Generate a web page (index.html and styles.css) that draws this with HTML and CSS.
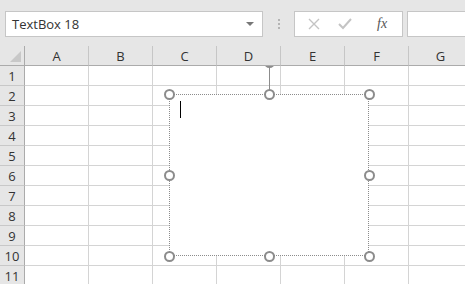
FILE: index.html
```html
<!DOCTYPE html>
<html lang="en">

<head>
    <meta charset="UTF-8">
    <title>Sheet1</title>
    <link rel="stylesheet" href="styles.css">
</head>

<body>
    <div class="formula-bar">
        <div class="name-box">
            <span class="name-text">TextBox 18</span>
            <span class="name-arrow"></span>
        </div>
        <div class="grip">
            <span></span><span></span><span></span>
        </div>
        <div class="fx-buttons">
            <svg class="btn-icon" width="14" height="14" viewBox="0 0 14 14">
                <path d="M2 2 L12 12 M12 2 L2 12" stroke="#c4c4c4" stroke-width="1.4" fill="none"/>
            </svg>
            <svg class="btn-icon" width="16" height="14" viewBox="0 0 16 14">
                <path d="M2 7 L6 11 L14 2" stroke="#c4c4c4" stroke-width="2" fill="none"/>
            </svg>
            <span class="fx">fx</span>
        </div>
        <div class="formula-input"></div>
    </div>

    <div class="sheet">
        <div class="grid" id="grid"></div>

        <span class="handle h-rot"></span>
        <div class="textbox">
            <div class="caret"></div>
            <span class="rotate-line"></span>
            <span class="handle h-tl"></span>
            <span class="handle h-tm"></span>
            <span class="handle h-tr"></span>
            <span class="handle h-ml"></span>
            <span class="handle h-mr"></span>
            <span class="handle h-bl"></span>
            <span class="handle h-bm"></span>
            <span class="handle h-br"></span>
        </div>
    </div>

    <script>
        const grid = document.getElementById('grid');
        const cols = ['A', 'B', 'C', 'D', 'E', 'F', 'G'];

        let html = '<div class="corner"></div>';
        cols.forEach(c => {
            html += '<div class="col-head">' + c + '</div>';
        });
        for (let r = 1; r <= 11; r++) {
            html += '<div class="row-head">' + r + '</div>';
            cols.forEach(() => {
                html += '<div class="cell"></div>';
            });
        }
        grid.innerHTML = html;
    </script>
</body>

</html>
```

FILE: styles.css
```css
body {
    margin: 0;
    padding: 0;
    font-family: 'Open Sans', 'Noto Sans', sans-serif;
    background-color: #ffffff;
    overflow: hidden;
    width: 465px;
    height: 284px;
}

/* formula bar */
.formula-bar {
    height: 46px;
    background-color: #e6e6e6;
    display: flex;
    align-items: flex-start;
    padding-top: 11px;
    padding-left: 5px;
    box-sizing: border-box;
}

.name-box {
    width: 258px;
    height: 26px;
    background-color: #fff;
    border: 1px solid #c6c6c6;
    box-sizing: border-box;
    display: flex;
    align-items: center;
    justify-content: space-between;
    padding: 0 8px 0 6px;
}

.name-text {
    font-size: 13px;
    color: #333;
}

.name-arrow {
    width: 0;
    height: 0;
    border-left: 4px solid transparent;
    border-right: 4px solid transparent;
    border-top: 4px solid #777;
}

.grip {
    width: 31px;
    height: 26px;
    display: flex;
    flex-direction: column;
    align-items: center;
    justify-content: center;
    gap: 2px;
}

.grip span {
    width: 2px;
    height: 2px;
    background-color: #b4b4b4;
}

.fx-buttons {
    width: 109px;
    height: 26px;
    background-color: #fff;
    border: 1px solid #c6c6c6;
    box-sizing: border-box;
    display: flex;
    align-items: center;
    padding-left: 12px;
    gap: 16px;
}

.fx {
    font-family: 'Liberation Serif', serif;
    font-style: italic;
    font-size: 14px;
    color: #555;
    margin-left: 8px;
}

.formula-input {
    flex: 1;
    height: 26px;
    margin-left: 4px;
    background-color: #fff;
    border: 1px solid #c6c6c6;
    border-right: none;
    box-sizing: border-box;
}

/* sheet */
.sheet {
    position: relative;
}

.grid {
    display: grid;
    grid-template-columns: 25px repeat(7, 64px);
    grid-auto-rows: 20px;
}

.grid > div {
    border-right: 1px solid #d4d4d4;
    border-bottom: 1px solid #d4d4d4;
    box-sizing: border-box;
}

.corner {
    background-color: #e6e6e6;
    position: relative;
    z-index: 2;
    border-bottom-color: #ababab !important;
    border-right-color: #ababab !important;
}

.corner::after {
    content: '';
    position: absolute;
    right: 3px;
    bottom: 3px;
    width: 0;
    height: 0;
    border-left: 11px solid transparent;
    border-bottom: 11px solid #c8c8c8;
}

.col-head {
    position: relative;
    z-index: 2;
    background-color: #e6e6e6;
    border-right-color: #c6c6c6 !important;
    border-bottom-color: #ababab !important;
    font-size: 13px;
    color: #333;
    text-align: center;
    line-height: 20px;
}

.row-head {
    background-color: #e6e6e6;
    border-right-color: #ababab !important;
    border-bottom-color: #c8c8c8 !important;
    font-size: 13px;
    color: #333;
    text-align: center;
    line-height: 20px;
}

/* text box shape */
.textbox {
    position: absolute;
    left: 169px;
    top: 48px;
    width: 200px;
    height: 162px;
    background-color: #fff;
    border: 1px dotted #8c8c8c;
    box-sizing: border-box;
}

.caret {
    position: absolute;
    left: 10px;
    top: 6px;
    width: 1px;
    height: 17px;
    background-color: #000;
}

.rotate-line {
    position: absolute;
    left: 99px;
    top: -28px;
    width: 1px;
    height: 28px;
    background-color: #8c8c8c;
}

.handle {
    position: absolute;
    width: 11px;
    height: 11px;
    border: 2px solid #8c8c8c;
    border-radius: 50%;
    background-color: #fff;
    box-sizing: border-box;
    margin-left: -5.5px;
    margin-top: -5.5px;
}

.h-tl { left: -1px; top: -1px; }
.h-tm { left: 99px; top: -1px; }
.h-tr { left: 199px; top: -1px; }
.h-ml { left: -1px; top: 80px; }
.h-mr { left: 199px; top: 80px; }
.h-bl { left: -1px; top: 161px; }
.h-bm { left: 99px; top: 161px; }
.h-br { left: 199px; top: 161px; }

.h-rot {
    left: 269px;
    top: 16px;
    z-index: 1;
}
```
